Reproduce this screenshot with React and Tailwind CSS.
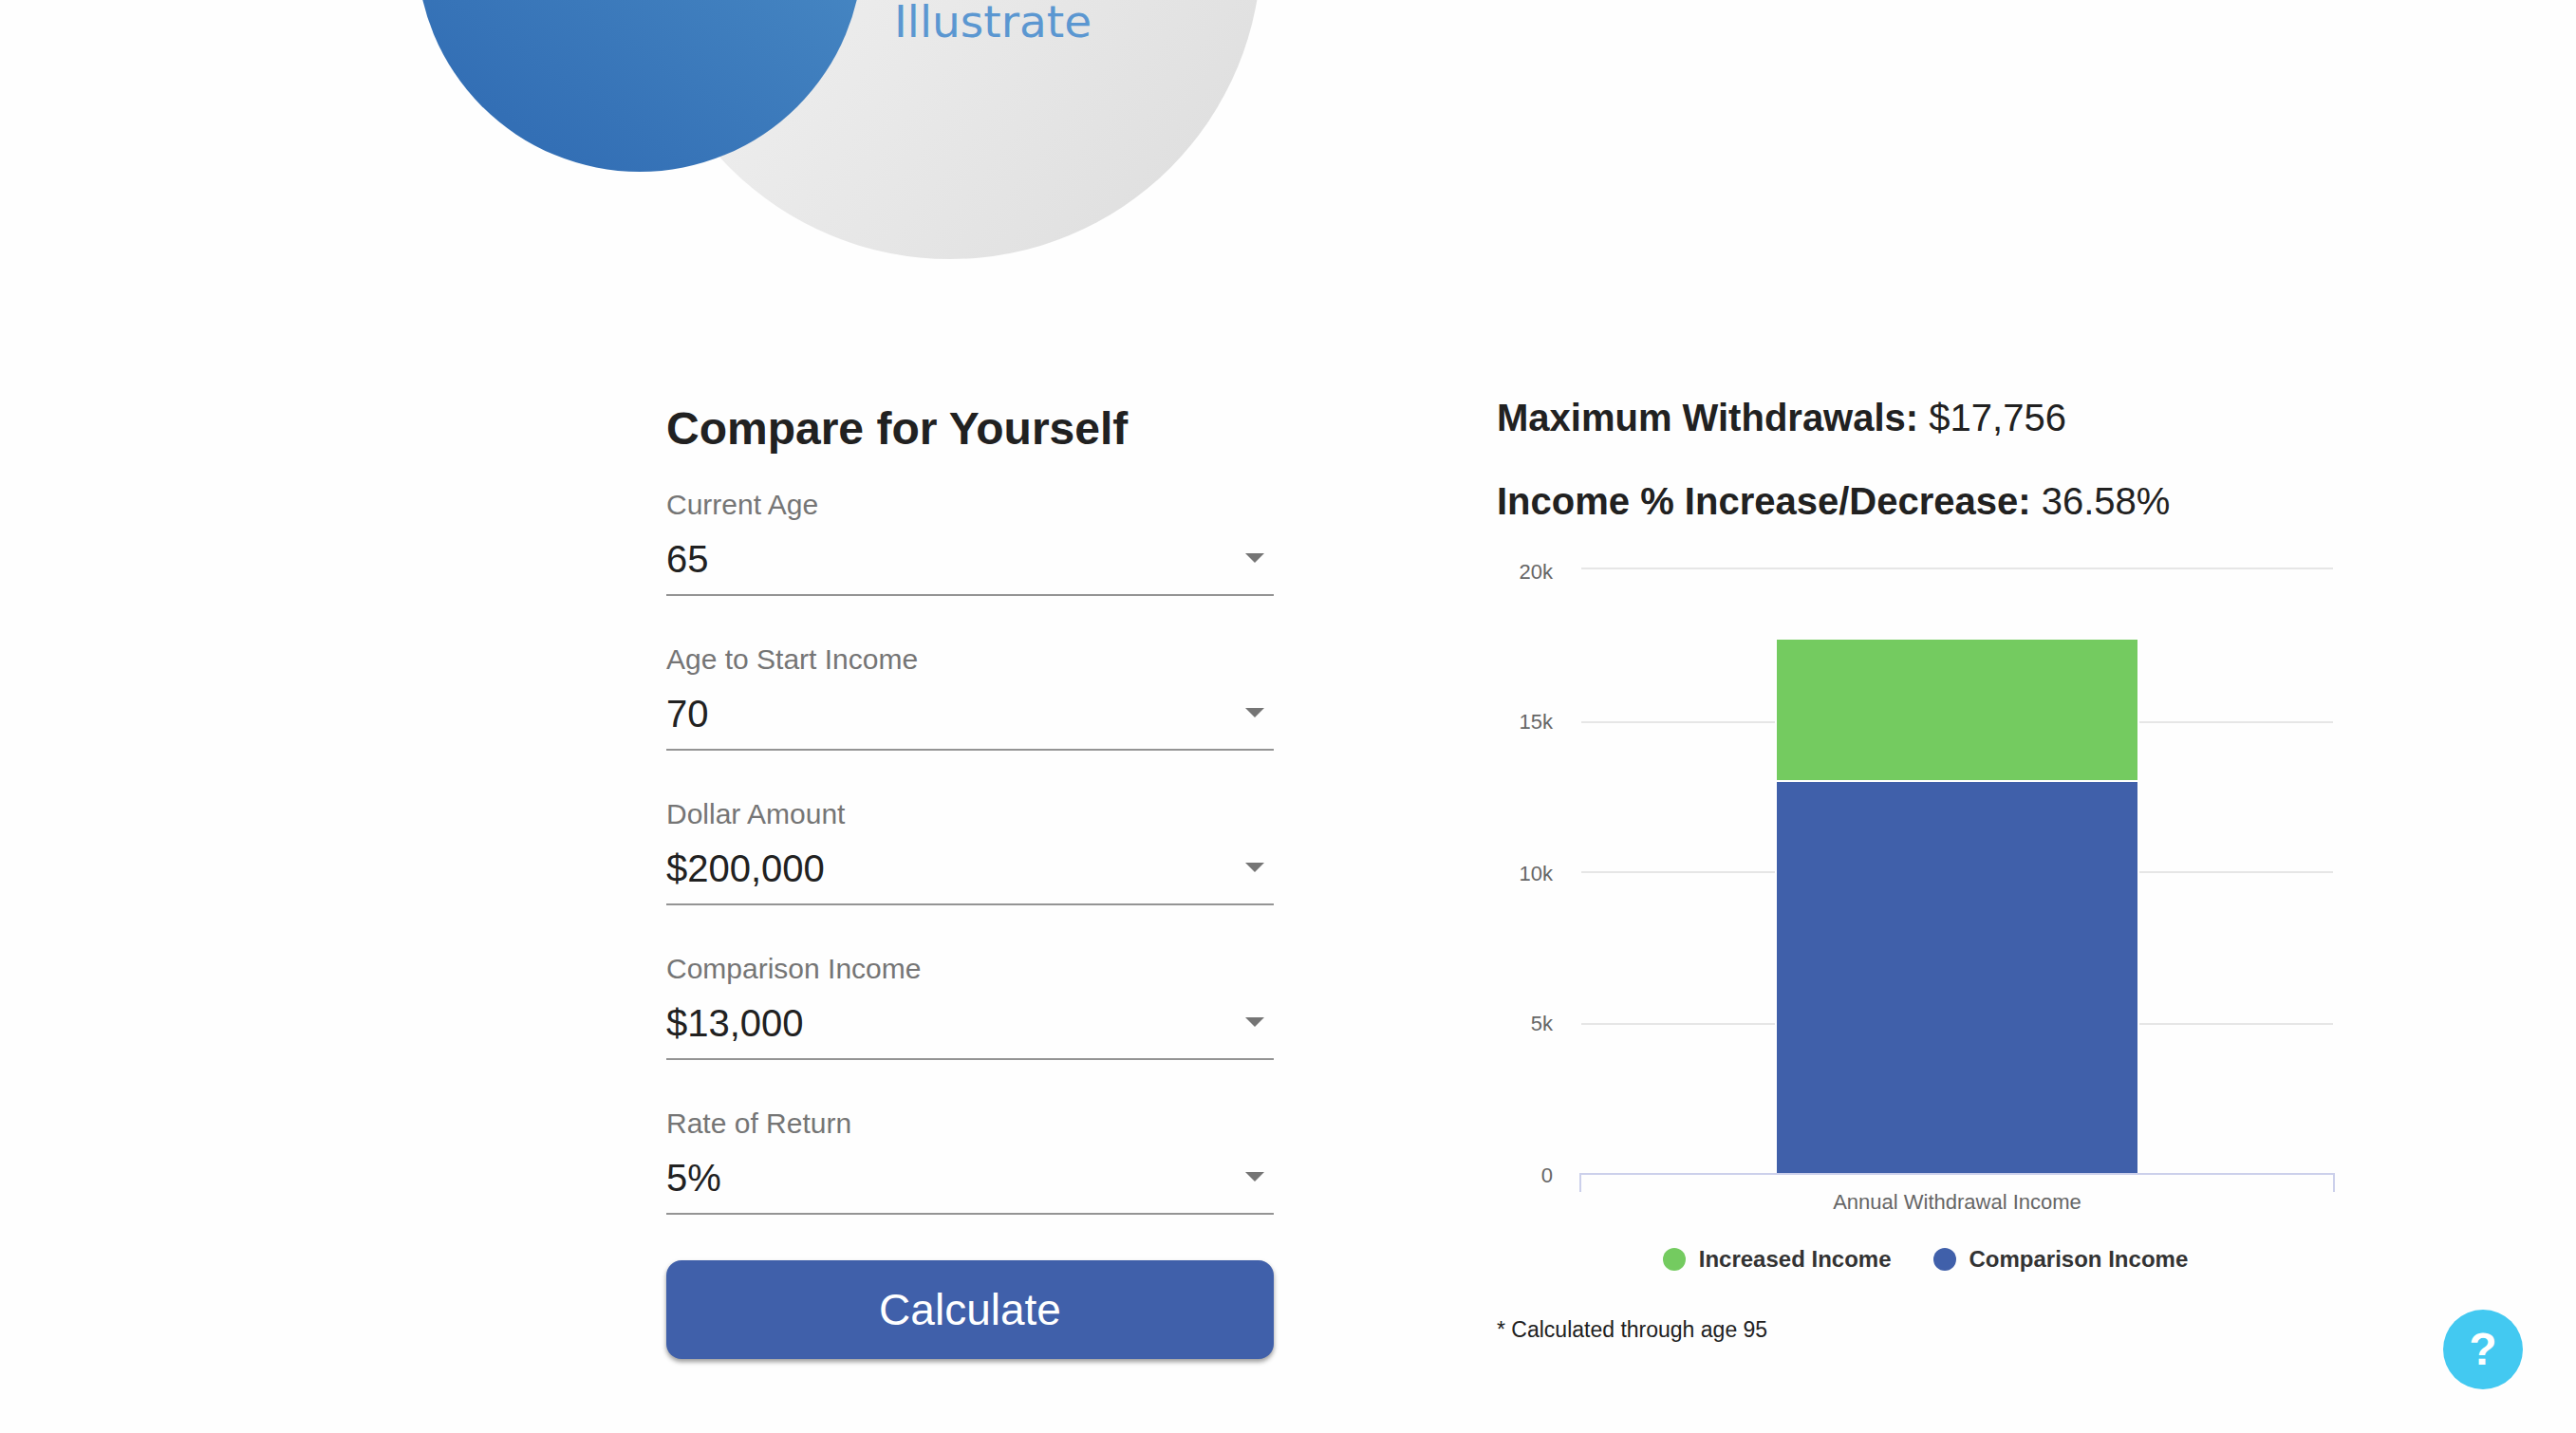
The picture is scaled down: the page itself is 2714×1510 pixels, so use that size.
const FIELDS = [
  { id: 'current-age', label: 'Current Age', value: '65', options: ['60', '65', '70'] },
  { id: 'start-age', label: 'Age to Start Income', value: '70', options: ['65', '70', '75'] },
  { id: 'amount', label: 'Dollar Amount', value: '$200,000', options: ['$100,000', '$200,000', '$300,000'] },
  { id: 'comparison', label: 'Comparison Income', value: '$13,000', options: ['$12,000', '$13,000', '$14,000'] },
  { id: 'rate', label: 'Rate of Return', value: '5%', options: ['4%', '5%', '6%'] },
];

const TICKS = [
  { label: '20k', y: 1, textY: 12 },
  { label: '15k', y: 163, textY: 170 },
  { label: '10k', y: 321, textY: 330 },
  { label: '5k', y: 481, textY: 488 },
];

function Venn() {
  return (
    <svg className="block w-full" viewBox="0 0 2714 273" role="img" aria-label="Illustrate">
      <defs>
        <linearGradient id="gray" x1="0" y1="0" x2="1" y2="0.77">
          <stop offset="0" stopColor="#f8f8f8" />
          <stop offset="1" stopColor="#dfdfdf" />
        </linearGradient>
        <linearGradient id="blue" x1="0.85" y1="0.15" x2="0.3" y2="0.95">
          <stop offset="0" stopColor="#4c8ec7" />
          <stop offset="1" stopColor="#336fb5" />
        </linearGradient>
      </defs>
      <circle cx="1001" cy="-55" r="328" fill="url(#gray)" />
      <circle cx="674" cy="-54" r="235" fill="url(#blue)" />
      <text x="942" y="39" fontSize="47" fill="#5b97d1" fontFamily="DejaVu Sans, sans-serif">Illustrate</text>
    </svg>
  );
}

function Field({ id, label, value, options }) {
  return (
    <div className="relative flex h-[163px] flex-col">
      <label htmlFor={id} className="text-[30px] leading-[40px] text-[#757575]">{label}</label>
      <select
        id={id}
        defaultValue={value}
        className="h-[76px] w-full appearance-none border-b-2 border-[#949494] bg-transparent text-[40px] leading-[48px] text-[#212121] outline-none"
      >
        {options.map((o) => <option key={o}>{o}</option>)}
      </select>
      <svg className="pointer-events-none absolute right-[10px] top-[71px] h-[10px] w-5" viewBox="0 0 20 10">
        <path d="M0 0H20L10 10Z" fill="#757575" />
      </svg>
    </div>
  );
}

function Chart() {
  return (
    <svg className="block w-full" viewBox="-1 -16 883 730" role="img" aria-label="Annual Withdrawal Income chart" fontFamily="Liberation Sans, Arial, sans-serif" fontSize="22" fill="#666666">
      {TICKS.map((t) => (
        <g key={t.label}>
          <path d={`M88 ${t.y}H880`} stroke="#e6e6e6" strokeWidth="2" />
          <text x="58" y={t.textY} textAnchor="end">{t.label}</text>
        </g>
      ))}
      <text x="58" y="648" textAnchor="end">0</text>
      <path d="M292 75H676V638H292Z" fill="#fff" />
      <path d="M294 76H674V224H294Z" fill="#74cb60" />
      <path d="M294 226H674V638H294Z" fill="#4060aa" />
      <path d="M87 658V639H881V658" fill="none" stroke="#ccd0eb" strokeWidth="2" />
      <text x="484" y="676" textAnchor="middle">Annual Withdrawal Income</text>
    </svg>
  );
}

export default function App() {
  return (
    <div className="min-h-screen w-full overflow-hidden bg-[#fefefe] font-['Liberation_Sans',Arial,sans-serif] text-[#212121]">
      <Venn />
      <main className="grid w-full grid-cols-[640fr_883fr] gap-[235px] pl-[702px] pr-[254px]">
        <section className="pt-[151px]">
          <h2 className="mb-8 text-[48px] font-bold leading-[56px]">Compare for Yourself</h2>
          <form onSubmit={(e) => e.preventDefault()}>
            {FIELDS.map((f) => <Field key={f.id} {...f} />)}
            <button className="mt-px h-[104px] w-full rounded-2xl bg-[#4060aa] text-[46px] text-white shadow-[0_3px_5px_rgba(0,0,0,0.4)]">Calculate</button>
          </form>
        </section>
        <section className="pt-[143px]">
          <p className="text-[40px] leading-[48px]"><strong>Maximum Withdrawals:</strong> $17,756</p>
          <p className="mb-[30px] mt-10 text-[40px] leading-[48px]"><strong>Income % Increase/Decrease:</strong> 36.58%</p>
          <Chart />
          <ul className="flex justify-center gap-11 pl-5 text-[24px] font-bold leading-[30px] text-[#333333]">
            <li className="flex items-center gap-[14px]"><span className="size-6 rounded-full bg-[#74cb60]" />Increased Income</li>
            <li className="flex items-center gap-[14px]"><span className="size-6 rounded-full bg-[#4060aa]" />Comparison Income</li>
          </ul>
          <p className="mt-11 text-[23px] leading-[30px]">* Calculated through age 95</p>
        </section>
      </main>
      <button aria-label="Help" className="fixed bottom-[46px] right-14 size-[84px] rounded-full bg-[#43c9f1] text-[48px] font-bold leading-none text-white">?</button>
    </div>
  );
}
